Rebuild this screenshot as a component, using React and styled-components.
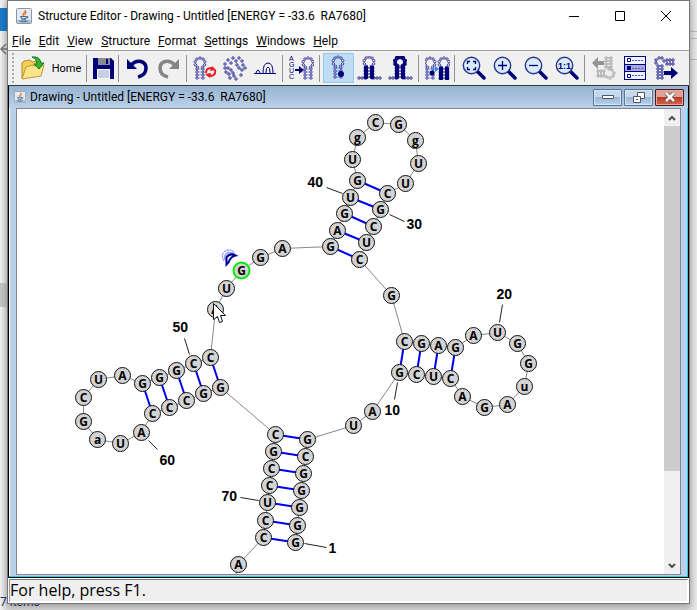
import React from "react";
import styled, { createGlobalStyle } from "styled-components";

const NAVY = "#000078";
const UI_FONT = 'Roboto, "Noto Sans", sans-serif';

const GlobalStyle = createGlobalStyle`
  *, *::before, *::after { box-sizing: border-box; }
  body { margin: 0; background: #e9e9e9; font-family: ${UI_FONT}; color: #000; }
  button { font: inherit; color: inherit; margin: 0; padding: 0; }
`;

/* ---------- desktop behind the window ---------- */

const Desktop = styled.main`
  position: relative;
  display: flex;
  min-height: 100vh;
  padding: 0 7px 6px;
  overflow: hidden;
  background: #e6e6e6;
`;

const Backdrop = styled.div`
  position: absolute;
  inset: 0;
  background: linear-gradient(90deg, #f2f2f2 0, #d8d8d8 7px, #d8d8d8 calc(100% - 8px), #e9e9e9 100%);
`;

const BackdropTab = styled.div`
  position: absolute;
  top: 8px;
  left: 0;
  width: 8px;
  height: 23px;
  background: #1979ca;
`;

const BackdropThumb = styled.div`
  position: absolute;
  top: 283px;
  left: 0;
  width: 8px;
  height: 24px;
  background: #c4c4c4;
`;

const BackdropRule = styled.div`
  position: absolute;
  top: ${(p) => p.$top}px;
  right: 0;
  width: 8px;
  height: 1px;
  background: #bcbcbc;
`;

const BackdropArrow = styled.svg`
  position: absolute;
  top: 43px;
  left: 0;
`;

const BackdropText = styled.span`
  position: absolute;
  left: 0;
  bottom: 1px;
  font-size: 12px;
  line-height: 14px;
  color: #26396b;
`;

/* ---------- main window ---------- */

const Window = styled.div`
  position: relative;
  flex: 1;
  min-width: 0;
  display: flex;
  flex-direction: column;
  border: 1px solid #777;
  background: #fff;
  box-shadow: 0 2px 7px rgba(0, 0, 0, 0.3);
`;

const TitleBar = styled.header`
  display: flex;
  align-items: center;
  height: 30px;
  padding-left: 8px;
`;

const Title = styled.h1`
  flex: 1;
  margin: 0 0 0 6px;
  font-size: 12px;
  font-weight: 400;
  line-height: 16px;
  white-space: pre;
`;

const CaptionButton = styled.button`
  display: flex;
  align-items: center;
  justify-content: center;
  width: 46px;
  height: 28px;
  border: 0;
  background: transparent;
`;

const MenuBar = styled.nav`
  display: flex;
  align-items: center;
  gap: 8px;
  height: 19px;
  padding-left: 4px;
`;

const MenuButton = styled.button`
  border: 0;
  background: transparent;
  font-size: 12px;
  line-height: 16px;
  white-space: nowrap;
  &::first-letter { text-decoration: underline; }
`;

const Toolbar = styled.div`
  display: flex;
  align-items: center;
  height: 36px;
  border-top: 1px solid #a0a0a0;
  border-bottom: 1px solid #2c3a44;
  background: #f0f0f0;
`;

const Grip = styled.div`
  width: 2px;
  height: 30px;
  margin: 0 4px;
  background: repeating-linear-gradient(180deg, #aaa 0 2px, transparent 2px 4px);
`;

const ToolButton = styled.button`
  display: flex;
  align-items: center;
  justify-content: center;
  gap: 7px;
  flex: none;
  width: ${(p) => p.$width || 31}px;
  height: 30px;
  border: 1px solid ${(p) => (p.$active ? "#90c8f6" : "transparent")};
  background: ${(p) => (p.$active ? "#c0dcf3" : "transparent")};
  font-size: 11px;
  svg { flex: none; }
`;

const Separator = styled.div`
  flex: none;
  width: 1px;
  height: 27px;
  margin: 0 3px 0 2px;
  background: #909090;
`;

/* ---------- document frame ---------- */

const Frame = styled.section`
  flex: 1;
  min-height: 0;
  display: flex;
  flex-direction: column;
  padding: 0 5px 0 1px;
  background: #b9d1ea;
  border-left: 1px solid #000;
  border-right: 1px solid #000;
  border-bottom: 1px solid #000;
  box-shadow: inset -1px -1px 0 #28cbe8, inset 1px 0 0 #fff;
`;

const FrameTitleBar = styled.div`
  display: flex;
  align-items: center;
  height: 22px;
  margin: 0 -5px 0 -1px;
  padding: 0 4px 0 5px;
  background: linear-gradient(180deg, #97b3d0, #bad1e9);
`;

const FrameTitle = styled.h2`
  flex: 1;
  margin: 0 0 0 4px;
  font-size: 12px;
  font-weight: 400;
  line-height: 16px;
  white-space: pre;
`;

const FrameButton = styled.button`
  display: flex;
  align-items: center;
  justify-content: center;
  width: 29px;
  height: 17px;
  margin-left: 2px;
  border: 1px solid ${(p) => (p.$close ? "#5b1519" : "#59748f")};
  border-radius: 1px;
  background: ${(p) =>
    p.$close
      ? "linear-gradient(180deg, #e0a294 0 45%, #b83b22 50%, #d2694b)"
      : "linear-gradient(180deg, #c5d9ed 0 45%, #9bb7d4 50%, #b9d3ec)"};
  box-shadow: inset 0 0 0 1px ${(p) => (p.$close ? "#dda99c" : "#d5e5f4")};
`;

const Content = styled.div`
  flex: 1;
  min-height: 0;
  display: flex;
  margin: 0 2px 2px 6px;
  border: 1px solid #82868c;
  background: #fff;
`;

const Canvas = styled.svg`
  flex: 1;
  min-width: 0;
  min-height: 440px;
  display: block;
  overflow: hidden;
`;

const ScrollBar = styled.div`
  display: flex;
  flex-direction: column;
  width: 16px;
  background: #f0f0f0;
`;

const ScrollButton = styled.button`
  display: flex;
  align-items: center;
  justify-content: center;
  height: 17px;
  border: 0;
  background: transparent;
`;

const ScrollTrack = styled.div`
  flex: 1;
`;

const ScrollThumb = styled.div`
  height: 80%;
  background: #cdcdcd;
`;

const StatusBar = styled.footer`
  height: 24px;
  margin: 1px 1px 0;
  border-top: 1px solid #777;
  border-left: 1px solid #999;
  border-bottom: 2px solid #fff;
  border-right: 1px solid #fff;
  background: #efefef;
  font-family: "Open Sans", "Noto Sans", sans-serif;
  font-size: 16px;
  line-height: 21px;
`;

/* ---------- RNA drawing ---------- */

const Backbone = styled.polyline`
  fill: none;
  stroke: #888;
  stroke-width: 1;
`;

const PairBond = styled.line`
  stroke: #0000f0;
  stroke-width: 2;
`;

const Tick = styled.line`
  stroke: #222;
  stroke-width: 1;
`;

const NodeRing = styled.circle`
  fill: #d3d3d3;
  stroke: ${(p) => (p.$selected ? "#00ea00" : "#111")};
  stroke-width: ${(p) => (p.$selected ? 2 : 1)};
`;

const NodeLetter = styled.text`
  font: 700 12px "Open Sans", "Noto Sans", sans-serif;
  text-anchor: middle;
`;

const IndexLabel = styled.text`
  font: 700 14px "Liberation Sans", Arial, sans-serif;
`;

/* Bases from 5' to 3': letter, x, y */
const BASES = [
  ["G", 295, 542], ["G", 297, 525], ["G", 299, 507], ["G", 301, 490], ["G", 303, 473],
  ["C", 305, 456], ["G", 307, 439], ["U", 353, 425], ["A", 372, 411], ["G", 399, 372],
  ["C", 416, 374], ["U", 433, 376], ["C", 450, 378], ["A", 462, 396], ["G", 484, 407],
  ["A", 507, 404], ["u", 524, 386], ["G", 528, 363], ["G", 517, 343], ["U", 497, 332],
  ["A", 473, 335], ["G", 455, 347], ["A", 438, 345], ["G", 421, 343], ["C", 404, 341],
  ["G", 391, 295], ["C", 359, 259], ["U", 366, 242], ["C", 373, 226], ["G", 380, 209],
  ["C", 387, 193], ["U", 405, 183], ["U", 418, 163], ["g", 415, 140], ["G", 398, 124],
  ["C", 375, 122], ["g", 357, 137], ["U", 352, 159], ["G", 357, 180], ["U", 350, 197],
  ["G", 344, 213], ["A", 337, 230], ["G", 330, 246], ["A", 282, 248], ["G", 260, 257],
  ["G", 241, 270], ["U", 226, 288], ["A", 215, 309], ["C", 210, 357], ["C", 193, 363],
  ["G", 176, 370], ["G", 159, 377], ["G", 142, 383], ["A", 122, 375], ["U", 98, 379],
  ["C", 83, 397], ["G", 83, 421], ["a", 97, 439], ["U", 120, 443], ["A", 141, 432],
  ["C", 152, 413], ["C", 169, 407], ["C", 186, 400], ["G", 203, 393], ["G", 220, 387],
  ["C", 275, 434], ["G", 273, 451], ["C", 271, 468], ["C", 269, 485], ["U", 267, 502],
  ["C", 265, 520], ["C", 263, 537], ["A", 238, 564],
];

const SELECTED = 45;

const PAIRS = [
  [0, 71], [1, 70], [2, 69], [3, 68], [4, 67], [5, 66], [6, 65],
  [9, 24], [10, 23], [11, 22], [12, 21],
  [26, 42], [27, 41], [28, 40], [29, 39], [30, 38],
  [48, 64], [49, 63], [50, 62], [51, 61], [52, 60],
];

/* Index label: text, text x/y, tick start, tick end */
const LABELS = [
  ["1", 328, 552, 304, 543, 326, 547],
  ["10", 384, 414, 397, 382, 394, 399],
  ["20", 496, 298, 502, 304, 499, 322],
  ["30", 406, 228, 389, 214, 404, 221],
  ["40", 307, 186, 326, 187, 342, 193],
  ["50", 172, 331, 184, 338, 189, 354],
  ["60", 159, 464, 148, 440, 157, 449],
  ["70", 221, 500, 240, 497, 258, 500],
];

function StructureDrawing() {
  const backbone = BASES.map(([, x, y]) => `${x},${y}`).join(" ") + " 234,580";
  return (
    <Canvas role="img" aria-label="RNA secondary structure">
      <g transform="translate(-16.5 -108.5)">
        <Backbone points={backbone} />
        {PAIRS.map(([a, b]) => (
          <PairBond key={a} x1={BASES[a][1]} y1={BASES[a][2]} x2={BASES[b][1]} y2={BASES[b][2]} />
        ))}
        {LABELS.map(([text, x, y, x1, y1, x2, y2]) => (
          <g key={text}>
            <Tick x1={x1} y1={y1} x2={x2} y2={y2} />
            <IndexLabel x={x} y={y}>{text}</IndexLabel>
          </g>
        ))}
        {BASES.map(([letter, x, y], i) => (
          <g key={i}>
            <NodeRing cx={x} cy={y} r="8" $selected={i === SELECTED} />
            <NodeLetter x={x} y={y + 4}>{letter}</NodeLetter>
          </g>
        ))}
        <g fill="none" stroke="#4a5cff">
          <path d="M223 260Q220 252 226 250Q232 248 234 253" strokeDasharray="2 1" />
          <path d="M225 260Q223 254 228 252L234 253" strokeWidth="2" stroke="#9aaaff" />
          <path d="M226 264V257Q229 252 235 255Q230 256 228 262Z" fill="#fff" stroke="#000090" strokeWidth="2" />
        </g>
        <path d="M213 303V319L217 316L219 322L222 321L220 315H225Z" fill="#fff" stroke="#111" />
      </g>
    </Canvas>
  );
}

/* ---------- icons ---------- */

function JavaIcon({ size }) {
  return (
    <svg width={size} height={size} viewBox="0 0 16 16" aria-hidden="true">
      <rect x=".5" y=".5" width="15" height="15" rx="1" fill="#e4eaf0" stroke="#8597a8" />
      <path d="M1 12h14v3H1z" fill="#b4c3d1" />
      <path d="M9 2Q10 4 8 5T8 8M10.500 4Q8 6 9.500 7" fill="none" stroke="#e8761c" strokeWidth="1.300" />
      <path d="M4.500 8.500h6v1.500q-3 1.500-5.500 0zM11 8.500q2.500 0 0 2M5.500 11.500q2.500 1 4.500 0M3.500 13q4 1.500 8.500 0" fill="none" stroke="#3e6d91" />
    </svg>
  );
}

function FolderIcon() {
  return (
    <svg width="24" height="24" viewBox="0 0 24 24" aria-hidden="true">
      <path d="M1 22V7l2-2 6-1 2 2 6-1v4l-11 3z" fill="#f1cf58" stroke="#b78b20" />
      <path d="M1 23 5 11l7-2 2 1 9-1-3 11z" fill="#fae58c" stroke="#c19a2e" />
      <path d="M11 1q8-1 9 6h3l-5 6-5-5h3q0-5-5-7z" fill="#35b52f" stroke="#137a18" />
    </svg>
  );
}

function SaveIcon() {
  return (
    <svg width="21" height="21" viewBox="0 0 21 21" aria-hidden="true">
      <path d="M0 0h18l3 3v18H0z" fill={NAVY} />
      <path d="M5 0h12v7H5z" fill="#8b8b94" />
      <path d="M13 1h2v5h-2z" fill={NAVY} />
      <path d="M4 11h13v10H4z" fill="#fff" />
      <path d="M5 13h11M5 15h11M5 17h11M5 19h11" stroke="#8aa1c8" />
    </svg>
  );
}

function TurnIcon({ redo }) {
  return (
    <svg width="23" height="21" viewBox="0 0 23 21" aria-hidden="true">
      <g transform={redo ? "translate(23 0) scale(-1 1)" : undefined}>
        <path d="M5 7Q10 2 15 3.500Q20 5 20 10Q20 17 12 19" fill="none" stroke={redo ? "#858585" : NAVY} strokeWidth="3.500" />
        <path d="M1 1v10h10z" fill={redo ? "#858585" : NAVY} />
      </g>
    </svg>
  );
}

const bead = (x, y, i) => <circle key={i} cx={x} cy={y} r="1.200" />;

function ringPoints(cx, cy, r, n = 9) {
  return Array.from({ length: n }, (_, i) => {
    const a = Math.PI * (0.67 + (1.66 * i) / (n - 1));
    return [cx + r * Math.cos(a), cy + r * Math.sin(a)];
  });
}

/* Stem-loop glyph; solidStem and solidLoop thicken those parts. */
function Hairpin({ x = 0, y = 0, solidStem, solidLoop, color = NAVY }) {
  const rows = [12, 15, 18, 21];
  return (
    <g transform={`translate(${x} ${y})`} fill="#f7f7ff" stroke={color} strokeWidth=".7">
      <g strokeWidth={solidLoop ? 2 : 0.7}>
        {ringPoints(6, 6, 5).map(([px, py], i) => bead(px, py, i))}
      </g>
      {rows.map((r) => (
        <path key={r} d={`M3 ${r}h6`} stroke={solidStem ? color : "#6f7bf0"} />
      ))}
      <g strokeWidth={solidStem ? 2.4 : 0.7}>
        {rows.map((r) => (
          <React.Fragment key={r}>
            {bead(3, r, "l")}
            {bead(9, r, "r")}
          </React.Fragment>
        ))}
      </g>
    </g>
  );
}

function BaseLine() {
  return (
    <g fill="#f7f7ff" stroke={NAVY} strokeWidth=".8">
      {[2, 5, 8, 17, 20, 23].map((x) => bead(x, 22, x))}
    </g>
  );
}

function HairpinRefreshIcon() {
  return (
    <svg width="24" height="24" viewBox="0 0 24 24" aria-hidden="true">
      <Hairpin x={1} y={1} />
      <g fill="none" stroke="#ed1c24" strokeWidth="2">
        <path d="M13 17q0-5 5-5l3 1M22 14q1 5-4 6l-4-1" />
      </g>
      <path d="M19 10l4 4-6 1zM17 22l-5-4 6-1z" fill="#ed1c24" />
    </svg>
  );
}

function RadialIcon() {
  const pts = [
    [5, 4], [8, 7], [10, 2], [13, 5], [16, 2], [19, 5],
    [14, 9], [16, 12], [19, 14], [22, 12], [20, 9],
    [2, 8], [2, 12], [5, 12], [8, 14], [10, 17], [11, 20], [13, 23],
    [3, 16], [6, 18], [7, 22], [18, 19],
  ];
  return (
    <svg width="24" height="25" viewBox="0 0 24 25" aria-hidden="true">
      <path d="M2 12q7 0 9 8M13 5q1 7 6 9M3 16l4 6" fill="none" stroke="#8a92ee" strokeWidth=".8" />
      <g fill="#f7f7ff" stroke={NAVY} strokeWidth=".8">{pts.map(([x, y], i) => bead(x, y, i))}</g>
    </svg>
  );
}

function ArcsIcon() {
  return (
    <svg width="22" height="14" viewBox="0 0 22 14" aria-hidden="true">
      <path d="M0 12.500h22M2 12q2-6 4 0M9 12q0-10 5-10t5 10M12 12q0-6 2-6t2 6" fill="none" stroke={NAVY} />
    </svg>
  );
}

const TinyLetter = styled.text`
  font: 7px "Liberation Sans", Arial, sans-serif;
  fill: ${NAVY};
`;

function SequenceFoldIcon() {
  return (
    <svg width="25" height="26" viewBox="0 0 25 26" aria-hidden="true">
      {["A", "G", "U", "C"].map((c, i) => (
        <TinyLetter key={c} x="0" y={6 + i * 6}>{c}</TinyLetter>
      ))}
      <Hairpin x={13} y={2} />
      <path d="M6 14h4v-3l5 4-5 4v-3H6z" fill={NAVY} />
    </svg>
  );
}

function HairpinDotIcon() {
  return (
    <svg width="24" height="26" viewBox="0 0 24 26" aria-hidden="true">
      <Hairpin x={5} y={1} />
      <circle cx="14" cy="19" r="3" fill={NAVY} />
    </svg>
  );
}

function HairpinStemIcon({ solidLoop }) {
  return (
    <svg width="25" height="24" viewBox="0 0 25 24" aria-hidden="true">
      <BaseLine />
      <Hairpin x={6} y={0} solidStem solidLoop={solidLoop} />
    </svg>
  );
}

function HairpinPairIcon() {
  return (
    <svg width="25" height="24" viewBox="0 0 25 24" aria-hidden="true">
      <Hairpin x={-1} y={1} />
      <circle cx="7" cy="17" r="2.500" fill={NAVY} />
      <Hairpin x={13} y={1} solidStem />
      <path d="M10 10v6l4-3z" fill="#1690ff" />
    </svg>
  );
}

const RatioText = styled.text`
  font: 700 9px "Liberation Sans", Arial, sans-serif;
  fill: ${NAVY};
  text-anchor: middle;
`;

function MagnifierIcon({ kind }) {
  return (
    <svg width="24" height="24" viewBox="0 0 24 24" aria-hidden="true">
      <path d="M15 15l7 7" stroke={NAVY} strokeWidth="3.500" strokeLinecap="round" />
      <circle cx="9.500" cy="9.500" r="8.200" fill="#d9eafa" stroke="#27378d" strokeWidth="1.400" />
      <g fill="none" stroke={NAVY} strokeWidth="1.300">
        {kind === "fit" && <path d="M5.500 8V5.500H8M11 5.500h2.500V8M13.500 11v2.500H11M8 13.500H5.500V11" />}
        {kind === "in" && <path d="M5 9.500h9M9.500 5v9" />}
        {kind === "out" && <path d="M5 9.500h9" />}
      </g>
      {kind === "one" && <RatioText x="9.500" y="13">1:1</RatioText>}
    </svg>
  );
}

function ExportIcon({ back }) {
  const color = back ? "#939393" : NAVY;
  const pts = back
    ? [[14, 2], [14, 5], [14, 8], [14, 11], [19, 2], [19, 5], [19, 8], [19, 11], [6, 15], [9, 15], [12, 15], [6, 20], [9, 20], [12, 20], [15, 21], [18, 22], [21, 20], [22, 17], [20, 14], [17, 13]]
    : [[2, 7], [2, 4], [5, 2], [8, 2], [10, 5], [13, 4], [16, 4], [19, 4], [13, 8], [16, 8], [19, 8], [4, 10], [4, 13], [4, 16], [4, 19], [4, 22], [8, 10], [8, 13], [8, 16], [8, 19], [8, 22]];
  return (
    <svg width="24" height="24" viewBox="0 0 24 24" aria-hidden="true">
      <path
        d={back ? "M14 2h5M14 5h5M14 8h5M14 11h5M6 15v5M9 15v5M12 15v5" : "M13 4v4M16 4v4M19 4v4M4 10h4M4 13h4M4 16h4M4 19h4M4 22h4"}
        stroke={back ? color : "#5d68e8"}
      />
      <g fill="#f5f5fa" stroke={color} strokeWidth=".8">{pts.map(([x, y], i) => bead(x, y, i))}</g>
      <path d={back ? "M0 7l6-6v4h6v4H6v4z" : "M10 15h7v-4l7 6-7 6v-4h-7z"} fill={color} />
    </svg>
  );
}

function ListIcon() {
  return (
    <svg width="22" height="24" viewBox="0 0 22 24" aria-hidden="true">
      <rect x=".5" y=".5" width="21" height="23" fill="#f2f2ff" stroke={NAVY} />
      <path d="M1 8h20v7H1z" fill="#a4a8dc" />
      <path d="M1 8.500h20M1 15.500h20" stroke={NAVY} />
      <path d="M3.500 2.500h3v3h-3zM3.500 18.500h3v3h-3z" fill="#fff" stroke={NAVY} />
      <path d="M3 10h4v4H3z" fill={NAVY} />
      <path d="M8 4.500h11M8 12.500h11M8 19.500h11" stroke="#5a5ab4" strokeWidth="1" strokeDasharray="2 1" />
    </svg>
  );
}

function Chevron({ up }) {
  return (
    <svg width="8" height="6" viewBox="0 0 8 6" aria-hidden="true">
      <path d={up ? "M1 5l3-3 3 3" : "M1 1l3 3 3-3"} fill="none" stroke="#505050" strokeWidth="2" />
    </svg>
  );
}

/* ---------- page ---------- */

const MENUS = ["File", "Edit", "View", "Structure", "Format", "Settings", "Windows", "Help"];

const TOOL_GROUPS = [
  [{ label: "Save", width: 26, icon: <SaveIcon /> }],
  [
    { label: "Undo", icon: <TurnIcon /> },
    { label: "Redo", icon: <TurnIcon redo /> },
  ],
  [
    { label: "Refresh drawing", width: 30, icon: <HairpinRefreshIcon /> },
    { label: "Circular layout", width: 30, icon: <RadialIcon /> },
    { label: "Arc layout", width: 30, icon: <ArcsIcon /> },
  ],
  [{ label: "Fold sequence", width: 31, icon: <SequenceFoldIcon /> }],
  [
    { label: "Select base", active: true, icon: <HairpinDotIcon /> },
    { label: "Select helix", icon: <HairpinStemIcon /> },
    { label: "Select structure", icon: <HairpinStemIcon solidLoop /> },
  ],
  [{ label: "Extend selection", width: 30, icon: <HairpinPairIcon /> }],
  [
    { label: "Zoom to fit", icon: <MagnifierIcon kind="fit" /> },
    { label: "Zoom in", icon: <MagnifierIcon kind="in" /> },
    { label: "Zoom out", icon: <MagnifierIcon kind="out" /> },
    { label: "Actual size", icon: <MagnifierIcon kind="one" /> },
  ],
  [
    { label: "Previous structure", icon: <ExportIcon back /> },
    { label: "Structure list", icon: <ListIcon /> },
    { label: "Next structure", icon: <ExportIcon /> },
  ],
];

const DOCUMENT = "Drawing - Untitled [ENERGY = -33.6  RA7680]";

export default function App() {
  return (
    <Desktop>
      <GlobalStyle />
      <Backdrop>
        <BackdropTab />
        <BackdropArrow width="8" height="12" aria-hidden="true">
          <path d="M8 6H1M6 1L1 6l5 5" fill="none" stroke="#777" strokeWidth="1.500" />
        </BackdropArrow>
        <BackdropThumb />
        <BackdropRule $top={31} />
        <BackdropRule $top={38} />
        <BackdropRule $top={59} />
        <BackdropText>7 items</BackdropText>
      </Backdrop>
      <Window>
        <TitleBar>
          <JavaIcon size={16} />
          <Title>{`Structure Editor - ${DOCUMENT}`}</Title>
          <CaptionButton aria-label="Minimize">
            <svg width="10" height="10"><path d="M0 5.500h10" stroke="#000" /></svg>
          </CaptionButton>
          <CaptionButton aria-label="Maximize">
            <svg width="10" height="10"><path d="M.5.5h9v9h-9z" fill="none" stroke="#000" /></svg>
          </CaptionButton>
          <CaptionButton aria-label="Close">
            <svg width="10" height="10"><path d="M0 0l10 10M10 0L0 10" stroke="#000" /></svg>
          </CaptionButton>
        </TitleBar>
        <MenuBar>
          {MENUS.map((m) => (
            <MenuButton key={m}>{m}</MenuButton>
          ))}
        </MenuBar>
        <Toolbar role="toolbar" aria-label="Main">
          <Grip />
          <ToolButton $width={66}>
            <FolderIcon />
            Home
          </ToolButton>
          {TOOL_GROUPS.map((group, g) => (
            <React.Fragment key={g}>
              <Separator />
              {group.map((t) => (
                <ToolButton key={t.label} aria-label={t.label} $width={t.width} $active={t.active}>
                  {t.icon}
                </ToolButton>
              ))}
            </React.Fragment>
          ))}
        </Toolbar>
        <Frame>
          <FrameTitleBar>
            <JavaIcon size={12} />
            <FrameTitle>{DOCUMENT}</FrameTitle>
            <FrameButton aria-label="Minimize document">
              <svg width="12" height="5"><path d="M.5.5h11v3H.5z" fill="#fff" stroke="#4d5661" /></svg>
            </FrameButton>
            <FrameButton aria-label="Restore document">
              <svg width="12" height="11">
                <path d="M4.500.5h7v6h-7z" fill="#fff" stroke="#4d5661" />
                <path d="M.5 4.500h7v6h-7zM3 7.500h2" fill="#fff" stroke="#4d5661" />
              </svg>
            </FrameButton>
            <FrameButton $close aria-label="Close document">
              <svg width="12" height="10">
                <path d="M2 1l8 8M10 1L2 9" stroke="#5a4345" strokeWidth="4" />
                <path d="M2 1l8 8M10 1L2 9" stroke="#fff" strokeWidth="2.500" />
              </svg>
            </FrameButton>
          </FrameTitleBar>
          <Content>
            <StructureDrawing />
            <ScrollBar>
              <ScrollButton aria-label="Scroll up"><Chevron up /></ScrollButton>
              <ScrollTrack><ScrollThumb /></ScrollTrack>
              <ScrollButton aria-label="Scroll down"><Chevron /></ScrollButton>
            </ScrollBar>
          </Content>
        </Frame>
        <StatusBar>For help, press F1.</StatusBar>
      </Window>
    </Desktop>
  );
}
